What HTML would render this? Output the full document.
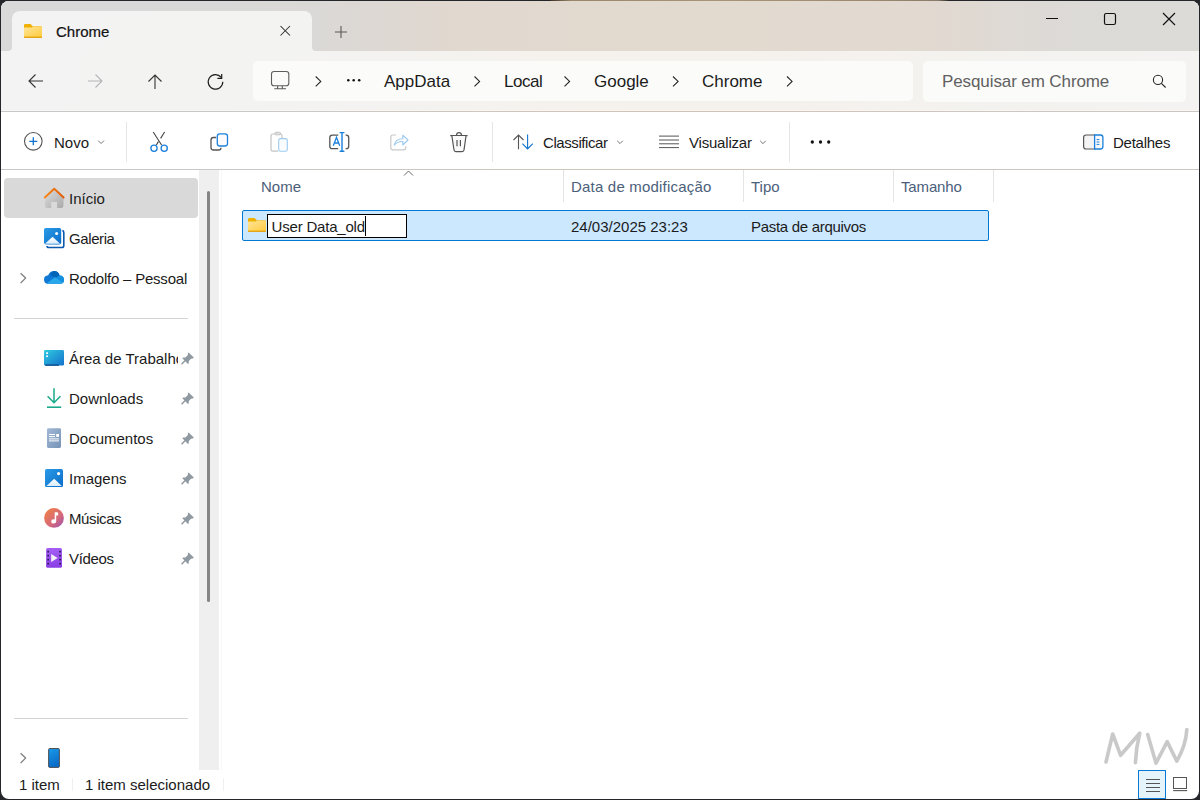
<!DOCTYPE html>
<html><head><meta charset="utf-8">
<style>
*{margin:0;padding:0;box-sizing:border-box}
html,body{width:1200px;height:800px;overflow:hidden;background:#24262a;font-family:"Liberation Sans",sans-serif;color:#1b1b1b}
#win{position:absolute;left:1px;top:1px;width:1198px;height:798px;border-radius:8px;overflow:hidden;background:#fff}
.tb{position:absolute;background-image:linear-gradient(90deg,#d9d9da 0%,#dad9d8 24%,#dcd8d4 30%,#e1d8cf 38%,#e2d9cf 55%,#e2d9d0 76%,#e0d9d2 81%,#dddad6 86%,#dcdbd8 100%);background-size:1198px 50px;background-repeat:no-repeat}
#navbg{position:absolute;left:0;top:0;width:1198px;height:50px;background:linear-gradient(90deg,#f3f3f3 0%,#f3f3f2 22%,#f5f2ee 45%,#f5f1ed 62%,#f4f2ef 80%,#f4f3f1 100%)}
.t{position:absolute;line-height:1;white-space:nowrap}
#tab{position:absolute;left:11px;top:10px;width:300px;height:40px;background:linear-gradient(90deg,#f3f3f3,#f3f3f2);border-radius:8px 8px 0 0}
.flare{position:absolute;top:42px;width:8px;height:8px;background:#f3f3f3}
.flare i{position:absolute;top:0;width:8px;height:8px;display:block}
#nav{position:absolute;left:0;top:50px;width:1198px;height:60px;background:linear-gradient(90deg,#f3f3f3 0%,#f3f3f2 22%,#f5f2ee 45%,#f5f1ed 62%,#f4f2ef 80%,#f4f3f1 100%)}
.ln{position:absolute;left:0;width:1198px;height:1px;background:linear-gradient(90deg,#c8c8c8 0%,#cbc8c5 25%,#d0c5b9 45%,#d0c4b8 62%,#cdc7c1 85%,#cbc6c1 100%)}
#addr{position:absolute;left:252px;top:60px;width:660px;height:40px;background:#fbfbfa;border-radius:5px}
#search{position:absolute;left:922px;top:60px;width:263px;height:41px;background:#fbfbfa;border-radius:5px}
#cmd{position:absolute;left:0;top:111px;width:1198px;height:57px;background:#fff}
.vsep{position:absolute;width:1px;background:#e6e6e6}
#track{position:absolute;left:198px;top:169px;width:20px;height:600px;background:#efefef}
#thumb{position:absolute;left:206px;top:190px;width:3px;height:411px;background:#858585;border-radius:2px}
.sel{position:absolute;left:3px;top:177px;width:194px;height:40px;background:#d9d9d9;border-radius:4px}
.hsep{position:absolute;height:1px;background:#d4d4d4}
#rowsel{position:absolute;left:241px;top:209px;width:747px;height:31px;background:#cce8ff;border:1px solid #0078d4;border-radius:2px}
#edit{position:absolute;left:266px;top:213px;width:140px;height:24px;background:#fff;border:1px solid #000}
#caret{position:absolute;left:364px;top:215px;width:1px;height:20px;background:#000}
#vbtn{position:absolute;left:1137px;top:769px;width:28px;height:29px;background:#e5f3fb;border:1px solid #0a78d4;border-radius:0}
</style></head><body>
<div style="position:absolute;left:550px;top:0;width:400px;height:1px;background:linear-gradient(90deg,#3a3028,#9a8668 5%,#a89478 40%,#9c8a70 80%,#8a7c68 97%,#222 100%)"></div>
<div id="win">
  <div id="navbg"></div>
  <div class="tb" style="left:0;top:0;width:1198px;height:20px;background-position:0 0"></div>
  <div class="tb" style="left:0;top:0;width:11px;height:49.5px;background-position:0 0;border-bottom-right-radius:4px"></div>
  <div class="tb" style="left:311px;top:0;width:887px;height:49.5px;background-position:-311px 0;border-bottom-left-radius:4px"></div>
  <div id="tab"></div>
  <div id="nav"></div>
  <div id="addr"></div>
  <div id="search"></div>
  <div id="cmd"></div>
  <div class="ln" style="top:110px"></div>
  <div class="ln" style="top:168px"></div>
  <div style="position:absolute;left:0;top:109px;width:1198px;height:1px;background:rgba(255,255,255,0.35)"></div>
  <div class="vsep" style="left:125px;top:121px;height:40px"></div>
  <div class="vsep" style="left:491px;top:121px;height:40px"></div>
  <div class="vsep" style="left:788px;top:121px;height:40px"></div>
  <div id="track"></div>
  <div class="vsep" style="left:220px;top:169px;height:600px;background:#f7f7f7"></div>
  <div id="thumb"></div>
  <div class="sel"></div>
  <div class="hsep" style="left:13px;top:317px;width:174px"></div>
  <div class="hsep" style="left:13px;top:717px;width:174px"></div>
  <div class="vsep" style="left:562px;top:169px;height:32px;background:#e5e5e5"></div>
  <div class="vsep" style="left:742px;top:169px;height:32px;background:#e5e5e5"></div>
  <div class="vsep" style="left:892px;top:169px;height:32px;background:#e5e5e5"></div>
  <div class="vsep" style="left:992px;top:169px;height:32px;background:#e5e5e5"></div>
  <div id="rowsel"></div>
  <div id="edit"></div>
  <div id="caret"></div>
  <div class="vsep" style="left:71px;top:777px;height:13px;background:#f0f0f0"></div>
  <div class="vsep" style="left:222px;top:777px;height:13px;background:#f0f0f0"></div>
  <div id="vbtn"></div>
</div>
<svg id="ic" width="1200" height="800" viewBox="0 0 1200 800" style="position:absolute;left:0;top:0" fill="none">
<defs>
 <linearGradient id="fbody" x1="0" y1="0" x2="1" y2="1"><stop offset="0" stop-color="#ffe49a"/><stop offset="1" stop-color="#ffcc40"/></linearGradient>
 <linearGradient id="home" x1="0" y1="0" x2="1" y2="1"><stop offset="0" stop-color="#dcdcdc"/><stop offset="1" stop-color="#a9a9a9"/></linearGradient>
 <linearGradient id="roof" x1="0" y1="0" x2="1" y2="0"><stop offset="0" stop-color="#f58a1a"/><stop offset="1" stop-color="#e05a08"/></linearGradient>
 <linearGradient id="blue1" x1="0" y1="0" x2="1" y2="1"><stop offset="0" stop-color="#2a9be6"/><stop offset="1" stop-color="#0b6cc9"/></linearGradient>
 <linearGradient id="desk" x1="0" y1="0" x2="1" y2="1"><stop offset="0" stop-color="#30cbe0"/><stop offset="1" stop-color="#1470cc"/></linearGradient>
 <linearGradient id="doc" x1="0" y1="0" x2="1" y2="1"><stop offset="0" stop-color="#a2b9d6"/><stop offset="1" stop-color="#7592b6"/></linearGradient>
 <linearGradient id="mus" x1="0" y1="0" x2="1" y2="1"><stop offset="0" stop-color="#f28240"/><stop offset="0.6" stop-color="#d66a7a"/><stop offset="1" stop-color="#9a4fb8"/></linearGradient>
 <linearGradient id="vid" x1="0" y1="0" x2="0" y2="1"><stop offset="0" stop-color="#a45ef4"/><stop offset="1" stop-color="#8a3ee6"/></linearGradient>
 <linearGradient id="phone" x1="0" y1="0" x2="0.3" y2="1"><stop offset="0" stop-color="#1a9ae8"/><stop offset="1" stop-color="#0a6cc8"/></linearGradient>
 <linearGradient id="mtn" x1="0" y1="0" x2="0" y2="1"><stop offset="0" stop-color="#ffffff"/><stop offset="1" stop-color="#d8ecfc"/></linearGradient>
 <g id="folder">
  <path d="M0 1.2Q0 0 1.2 0H6.6L8.6 2.2H16.8Q18 2.2 18 3.4V12.8Q18 14 16.8 14H1.2Q0 14 0 12.8Z" fill="#f0b000"/>
  <path d="M0 4.3Q0 3.5 0.8 3.5H8L9 2.6H17.2Q18 2.6 18 3.4V12.6H0Z" fill="url(#fbody)"/>
  <rect x="0" y="12.9" width="18" height="1.1" rx="0.5" fill="#e2a41c"/>
 </g>
 <g id="pin"><path d="M7.2 0.6 L12.4 5.8 L11.4 6.6 L9.6 6.9 L7.4 9.2 L7.3 11.6 L6.6 12.2 L0.9 6.5 L1.6 5.8 L4 5.6 L6.3 3.4 L6.5 1.5Z" fill="#8f99a1"/><path d="M3.6 8.9 L0.6 11.9" stroke="#8f99a1" stroke-width="1.5" stroke-linecap="round"/></g>
</defs>
<!-- tab -->
<use href="#folder" x="24" y="24"/>
<path d="M280.5 26L290 35.5M290 26L280.5 35.5" stroke="#2b2b2b" stroke-width="1.05"/>
<path d="M335 32H347M341 26V38" stroke="#5a5a5a" stroke-width="1.1"/>
<!-- window controls -->
<path d="M1046 18.5H1058" stroke="#111" stroke-width="1"/>
<rect x="1104.5" y="13.5" width="11" height="11" rx="1.8" stroke="#111" stroke-width="1.2"/>
<path d="M1163 13L1175 25M1175 13L1163 25" stroke="#111" stroke-width="1.15"/>
<!-- nav -->
<path d="M43 81H29M35.5 74.5L29 81L35.5 87.5" stroke="#333" stroke-width="1.1"/>
<path d="M88 81H102M95.5 74.5L102 81L95.5 87.5" stroke="#b5b5b5" stroke-width="1.1"/>
<path d="M155 89V75M148.5 81.5L155 75L161.5 81.5" stroke="#333" stroke-width="1.1"/>
<path d="M222.8 81.8A7.3 7.3 0 1 1 221.2 77.3" stroke="#1a1a1a" stroke-width="1.15"/>
<path d="M221.7 74V78.3H217.4" stroke="#1a1a1a" stroke-width="1.2"/>
<!-- address -->
<rect x="271.5" y="71.5" width="17.3" height="14.3" rx="2.6" stroke="#5c5c5c" stroke-width="1.1"/>
<path d="M277.6 86V88.6M282.3 86V88.6M274.3 88.7H286" stroke="#5c5c5c" stroke-width="1.1"/>
<path d="M315.7 76.5L320.8 81.4L315.7 86.3" stroke="#222" stroke-width="1.05"/>
<circle cx="348.3" cy="80.2" r="1.25" fill="#111"/><circle cx="353.7" cy="80.2" r="1.25" fill="#111"/><circle cx="359.2" cy="80.2" r="1.25" fill="#111"/>
<path d="M474.5 76.5L479.6 81.4L474.5 86.3M564.5 76.5L569.6 81.4L564.5 86.3M673 76.5L678.1 81.4L673 86.3M787 76.5L792.1 81.4L787 86.3" stroke="#222" stroke-width="1.05"/>
<circle cx="1158" cy="79.9" r="4.6" stroke="#222" stroke-width="1.1"/>
<path d="M1161.4 83.3L1165.6 87.5" stroke="#222" stroke-width="1.1"/>
<!-- command bar -->
<circle cx="33.3" cy="141.3" r="8.8" stroke="#555" stroke-width="1.1"/>
<path d="M29.3 141.3H37.3M33.3 137.3V145.3" stroke="#0f72d0" stroke-width="1.3"/>
<path d="M98.2 140.6L101.1 143.5L104 140.6" stroke="#777" stroke-width="1"/>
<path d="M153.2 132L161.6 145M164.6 132L160.6 138.4M158.4 141.6L156.2 145.2" stroke="#444" stroke-width="1.1"/>
<circle cx="154" cy="148.2" r="3.1" stroke="#1a80dc" stroke-width="1.3"/>
<circle cx="164.2" cy="148.2" r="3.1" stroke="#1a80dc" stroke-width="1.3"/>
<path d="M216.2 137.5H213.4Q211 137.5 211 140V147.5Q211 150 213.4 150H218.5Q221 150 221 147.8" stroke="#555" stroke-width="1.3"/>
<rect x="217.3" y="133.8" width="10.2" height="12.2" rx="2.5" fill="#fbfbfb" stroke="#1a80dc" stroke-width="1.3"/>
<path d="M276 134H273Q271 134 271 136V149.3Q271 151.2 273 151.2H278M282 139V136Q282 134 280 134H279" stroke="#c4c4c4" stroke-width="1.2"/>
<rect x="274.8" y="132.3" width="5.8" height="2.5" rx="1.2" fill="#e0e0e0" stroke="#c4c4c4" stroke-width="1"/>
<rect x="278.7" y="138.6" width="8.6" height="12.6" rx="1.8" fill="#fafcff" stroke="#9ccaf0" stroke-width="1.1"/>
<path d="M338.2 135.2H332.3Q329.8 135.2 329.8 137.7V146.2Q329.8 148.7 332.3 148.7H338.2M345.6 135.2H346.3Q348.7 135.2 348.7 137.7V146.2Q348.7 148.7 346.3 148.7H345.6" stroke="#555" stroke-width="1.3"/>
<path d="M333.3 145.8L336.5 137.3L339.7 145.8M334.4 143H338.6" stroke="#1a80dc" stroke-width="1.3"/>
<path d="M342 132.6V151.2M339.6 132.6H344.4M339.6 151.2H344.4" stroke="#1a80dc" stroke-width="1.4"/>
<path d="M396 135H393Q390.8 135 390.8 137.2V147.4Q390.8 149.8 393 149.8H403.4Q405.8 149.8 405.8 147.4V146.2" stroke="#c9c9c9" stroke-width="1.2"/>
<path d="M394.2 145.2Q395.4 138.8 402.8 138.8V135.2L408 140L402.8 145V141.6Q397.8 141.2 394.2 145.2Z" fill="#fbfdff" stroke="#9ccaf0" stroke-width="1.1" stroke-linejoin="round"/>
<path d="M450.2 135.6H467.6M456.4 135.4Q456.6 132.6 459 132.6Q461.4 132.6 461.6 135.4" stroke="#555" stroke-width="1.2"/>
<path d="M451.9 136L454 150Q454.2 151.6 455.8 151.6H462.2Q463.8 151.6 464 150L466 136" stroke="#555" stroke-width="1.2" fill="#fafafa"/>
<path d="M457 140V146.2M460.4 140V146.2" stroke="#555" stroke-width="1.2"/>
<path d="M518.5 149.3V135M513.5 140L518.5 135L523.5 140" stroke="#555" stroke-width="1.1"/>
<path d="M527.6 134.6V149M522.4 143.7L527.6 149L532.8 143.7" stroke="#0f72d0" stroke-width="1.1"/>
<path d="M617.2 140.8L620 143.6L622.8 140.8" stroke="#777" stroke-width="1"/>
<path d="M659 136.1H679M659 140H679M659 143.8H679M659 147.6H679" stroke="#555" stroke-width="1"/>
<path d="M760.2 140.8L763 143.6L765.8 140.8" stroke="#777" stroke-width="1"/>
<circle cx="812.3" cy="142" r="1.65" fill="#111"/><circle cx="820.5" cy="142" r="1.65" fill="#111"/><circle cx="828.7" cy="142" r="1.65" fill="#111"/>
<path d="M1094.6 135H1086.1Q1083.6 135 1083.6 137.5V146.5Q1083.6 149 1086.1 149H1094.6Z" fill="#f4f4f4" stroke="#555" stroke-width="1.2"/>
<path d="M1094.6 135H1100.4Q1102.9 135 1102.9 137.5V146.5Q1102.9 149 1100.4 149H1094.6Z" fill="#fafafa" stroke="#1a80dc" stroke-width="1.3"/>
<path d="M1096.6 139.6H1099.4M1096.6 142H1099.4M1096.6 144.4H1099.4" stroke="#1a80dc" stroke-width="1"/>
<!-- sidebar icons -->
<path d="M45 198.5V205.8Q45 208 47 208H51.2V202H57V208H61.4Q63.4 208 63.4 205.8V198.5L54.2 190.2Z" fill="url(#home)"/>
<path d="M44.8 197.6L54.2 188.8L63.6 197.6" stroke="url(#roof)" stroke-width="2" stroke-linecap="round" stroke-linejoin="round"/>
<path d="M62.3 230.6Q63.8 230.8 63.8 232.6V245.4Q63.8 247.5 61.8 247.5H48.8Q47 247.5 47 246" stroke="#0a58b0" stroke-width="1.6" fill="none"/>
<rect x="44" y="228" width="17.2" height="16.4" rx="1.8" fill="url(#blue1)"/>
<path d="M45 243.8L52.5 236.8L60.2 243.8Z" fill="url(#mtn)"/>
<circle cx="56.6" cy="233.6" r="1.5" fill="#fff"/>
<path d="M20.6 273.2L25.6 278.1L20.6 283" stroke="#808080" stroke-width="1.3"/>
<path d="M48 283.8Q44 283.8 44 279.6Q44 275.6 48.2 275.2Q50 271 54.2 271Q58.5 271 59.6 275.6Q64 275.8 64 279.8Q64 283.8 60.2 283.8Z" fill="#0f78d4"/>
<path d="M50 275.2Q52 271 54.2 271Q58.5 271 59.6 275.6L56 277.5Z" fill="#0364b8"/>
<path d="M46.5 283.6L55 277.2L63.5 282.6Q63 283.8 60.2 283.8H48Z" fill="#28a8ea"/>
<path d="M56 277.4L59.6 275.6Q64 275.8 64 279.8Q64 281.4 63.4 282.6Z" fill="#1490df"/>
<rect x="44" y="350" width="20" height="15.6" rx="1.4" fill="url(#desk)"/>
<rect x="45.2" y="364.4" width="13.6" height="1.4" fill="#0a4a8a"/>
<rect x="46.2" y="352.3" width="1.8" height="1.7" fill="#fff"/><rect x="46.2" y="355.4" width="1.8" height="1.7" fill="#fff"/>
<path d="M54 388.3V402.6M47.6 396.3L54 402.7L60.4 396.3" stroke="#1aa98a" stroke-width="1.5"/>
<path d="M47 407.2H61.2" stroke="#1aa98a" stroke-width="1.6"/>
<rect x="47" y="428.3" width="14" height="19.7" rx="1.4" fill="url(#doc)"/>
<path d="M49 434.5H55M49 436.6H55M49 438.9H59M49 440.9H59" stroke="#fff" stroke-width="1"/>
<rect x="56.2" y="434" width="2.8" height="2.9" fill="#fff"/>
<rect x="45" y="469" width="18" height="18" rx="1.6" fill="url(#blue1)"/>
<path d="M46.4 486L54.2 478.7L61.8 486Z" fill="url(#mtn)"/>
<circle cx="58.6" cy="473.6" r="1.6" fill="#fff"/>
<circle cx="54" cy="517.9" r="9.9" fill="url(#mus)"/>
<path d="M54.7 512.2H57.2Q58.2 512.2 58.2 513.2V515.4H56.2V521.6Q56.2 523.6 53.6 523.6Q51.2 523.6 51.2 521.4Q51.2 519.4 53.6 519.3Q54.3 519.3 54.7 519.5Z" fill="#fff"/>
<rect x="46.1" y="548" width="15.9" height="19.8" rx="1.6" fill="url(#vid)"/>
<g fill="#2a1f55"><rect x="47.3" y="550.8" width="1.7" height="1.7"/><rect x="47.3" y="554.8" width="1.7" height="1.7"/><rect x="47.3" y="558.8" width="1.7" height="1.7"/><rect x="47.3" y="562.8" width="1.7" height="1.7"/>
<rect x="59.2" y="550.8" width="1.7" height="1.7"/><rect x="59.2" y="554.8" width="1.7" height="1.7"/><rect x="59.2" y="558.8" width="1.7" height="1.7"/><rect x="59.2" y="562.8" width="1.7" height="1.7"/></g>
<path d="M51.2 554L57.6 558L51.2 562Z" fill="#f4f0fa"/>
<use href="#pin" x="181.4" y="351.8"/><use href="#pin" x="181.4" y="391.8"/><use href="#pin" x="181.4" y="431.8"/><use href="#pin" x="181.4" y="471.8"/><use href="#pin" x="181.4" y="511.8"/><use href="#pin" x="181.4" y="551.8"/>
<path d="M20.6 753.2L25.6 758.1L20.6 763" stroke="#808080" stroke-width="1.3"/>
<rect x="48.6" y="748.5" width="10.8" height="18.9" rx="1.2" fill="url(#phone)" stroke="#4a4442" stroke-width="0.9"/>
<!-- content -->
<path d="M404 175.5L408.5 171L413 175.5" stroke="#666" stroke-width="1"/>
<use href="#folder" x="248" y="218"/>
<!-- status bar -->
<path d="M1146 779.5H1160M1146 783.5H1160M1146 787.5H1160M1146 791.5H1160" stroke="#555" stroke-width="1.1"/>
<rect x="1173.5" y="777.5" width="13" height="11" stroke="#555" stroke-width="1"/>
<path d="M1173.2 790.6H1187.2" stroke="#555" stroke-width="1.1"/>
<!-- watermark -->
<path d="M1106 762L1112.7 734L1120.6 755.3L1139.7 733.2Q1136 748 1135.4 762.6M1147.7 734.5L1156 763.2L1167.2 741.6L1176.8 761.2Q1186 745 1186.8 729.6" stroke="#c9c9c9" stroke-width="3.6" stroke-linecap="round" stroke-linejoin="round"/>
</svg>
<div class="t" style="left:56px;top:24.3px;font-size:15px;color:#111;-webkit-text-stroke:0.2px #111">Chrome</div>
<div class="t" style="left:384px;top:72.7px;font-size:17px">AppData</div>
<div class="t" style="left:504px;top:72.7px;font-size:17px;letter-spacing:-0.45px">Local</div>
<div class="t" style="left:594px;top:72.7px;font-size:17px">Google</div>
<div class="t" style="left:702px;top:72.7px;font-size:17px">Chrome</div>
<div class="t" style="left:942px;top:73.4px;font-size:17px;color:#606060;letter-spacing:-0.1px">Pesquisar em Chrome</div>
<div class="t" style="left:54px;top:135px;font-size:15px">Novo</div>
<div class="t" style="left:543px;top:135px;font-size:15px;letter-spacing:-0.42px">Classificar</div>
<div class="t" style="left:689px;top:135px;font-size:15px;letter-spacing:-0.2px">Visualizar</div>
<div class="t" style="left:1113px;top:135px;font-size:15px;letter-spacing:-0.25px">Detalhes</div>
<div class="t" style="left:69px;top:191.3px;font-size:15px">Início</div>
<div class="t" style="left:69px;top:231.3px;font-size:15px;letter-spacing:-0.4px">Galeria</div>
<div class="t" style="left:69px;top:271.3px;font-size:15px;letter-spacing:-0.22px">Rodolfo – Pessoal</div>
<div class="t" style="left:69px;top:351.3px;font-size:15px;width:109px;overflow:hidden">Área de Trabalho</div>
<div class="t" style="left:69px;top:391.3px;font-size:15px">Downloads</div>
<div class="t" style="left:69px;top:431.3px;font-size:15px">Documentos</div>
<div class="t" style="left:69px;top:471.3px;font-size:15px">Imagens</div>
<div class="t" style="left:69px;top:511.3px;font-size:15px;letter-spacing:-0.4px">Músicas</div>
<div class="t" style="left:69px;top:551.3px;font-size:15px;letter-spacing:-0.35px">Vídeos</div>
<div class="t" style="left:261px;top:179.3px;font-size:15px;color:#4c607a">Nome</div>
<div class="t" style="left:571px;top:179.3px;font-size:15px;color:#4c607a;letter-spacing:0.2px">Data de modificação</div>
<div class="t" style="left:751px;top:179.3px;font-size:15px;color:#4c607a">Tipo</div>
<div class="t" style="left:901px;top:179.3px;font-size:15px;color:#4c607a;letter-spacing:-0.15px">Tamanho</div>
<div class="t" style="left:271.6px;top:219.3px;font-size:15px;letter-spacing:-0.2px">User Data_old</div>
<div class="t" style="left:571px;top:219.3px;font-size:15px">24/03/2025 23:23</div>
<div class="t" style="left:751px;top:219.3px;font-size:15px;letter-spacing:-0.3px">Pasta de arquivos</div>
<div class="t" style="left:19px;top:777.3px;font-size:15px">1 item</div>
<div class="t" style="left:85px;top:777.3px;font-size:15px">1 item selecionado</div>
</body></html>
